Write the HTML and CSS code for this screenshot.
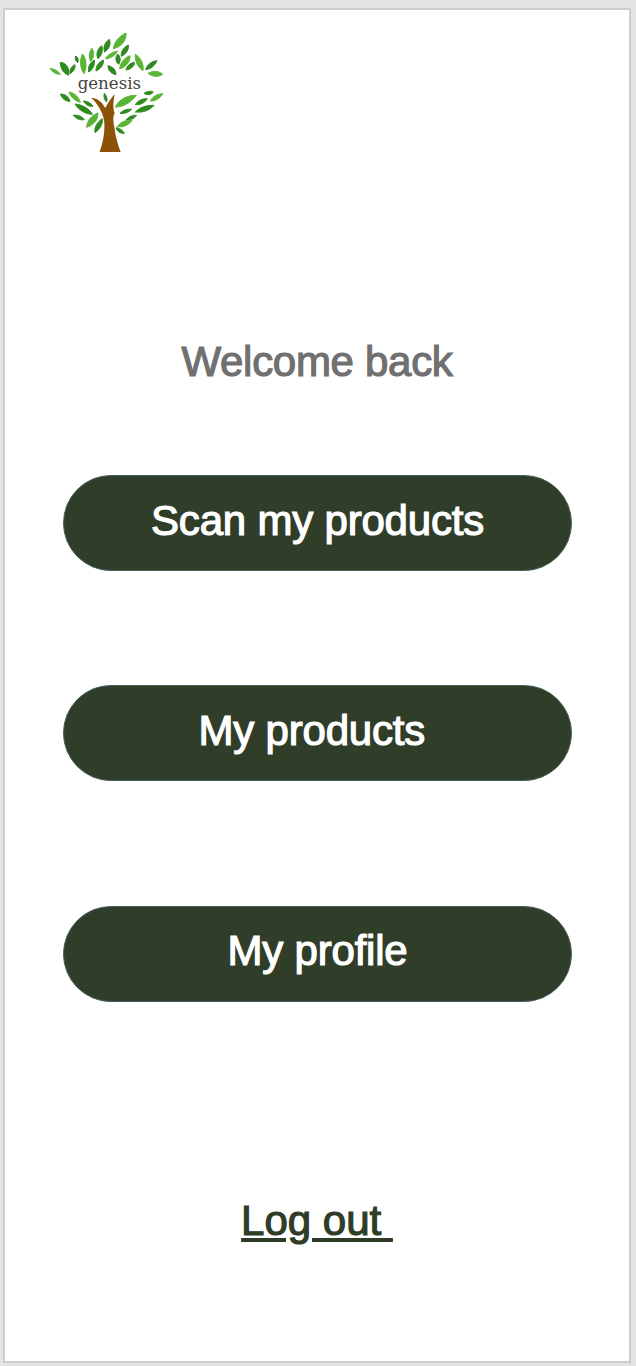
FILE: index.html
```html
<!DOCTYPE html>
<html lang="en">
<head>
<meta charset="utf-8">
<title>Genesis</title>
<link rel="stylesheet" href="styles.css">
</head>
<body>
<main class="frame">
  <header class="brand">
    <svg class="logo" viewBox="0 0 450 420" width="150" height="140" role="img" aria-label="genesis logo">
      <g class="leaf-dark">
        <path d="M91 127C108 128 119 143 116 166C100 160 91 146 91 127Z"/>
        <path d="M137 108C146 113 146 122 143 128C136 122 134 115 137 108Z"/>
        <path d="M135 134C137 146 129 156 120 161C118 148 124 139 135 134Z"/>
        <path d="M193 120C195 135 189 148 176 156C173 140 180 128 193 120Z"/>
        <path d="M215 77C220 92 215 106 204 116C197 102 202 87 215 77Z"/>
        <path d="M238 58C244 73 237 87 224 96C218 81 225 67 238 58Z"/>
        <path d="M295 75C297 90 288 102 274 109C272 94 281 82 295 75Z"/>
        <path d="M263 102C273 112 272 123 266 133C256 124 255 112 263 102Z"/>
        <path d="M220 120C222 135 211 147 198 153C197 138 206 127 220 120Z"/>
        <path d="M234 137C250 140 258 151 258 164C243 161 234 151 234 137Z"/>
        <path d="M313 127C314 139 303 148 288 150C290 138 300 129 313 127Z"/>
        <path d="M381 122C375 137 362 147 347 149C351 134 364 124 381 122Z"/>
        <path d="M91 222C106 222 117 231 120 244C105 244 96 235 91 222Z"/>
        <path d="M135 252C155 254 178 265 187 283C165 282 146 270 135 252Z"/>
        <path d="M160 243C172 243 184 250 189 259C176 260 167 254 160 243Z"/>
        <path d="M130 286C143 284 156 289 163 299C149 301 138 296 130 286Z"/>
        <path d="M223 220C230 228 233 237 230 246C223 240 220 230 223 220Z"/>
        <path d="M342 220C352 213 361 212 370 216C362 225 352 227 342 220Z"/>
        <path d="M352 236C344 249 331 255 316 254C323 241 337 236 352 236Z"/>
        <path d="M372 256C358 272 339 278 316 276C330 261 350 256 372 256Z"/>
        <path d="M305 268C295 278 283 282 270 280C279 270 292 266 305 268Z"/>
        <path d="M320 286C311 297 300 302 288 300C297 289 308 285 320 286Z"/>
        <path d="M217 296C219 312 210 328 195 338C192 322 202 306 217 296Z"/>
        <path d="M258 323C270 325 279 331 283 340C271 341 262 335 258 323Z"/>
      </g>
      <g class="leaf-light">
        <path d="M60 145C74 147 85 153 91 163C77 163 67 156 60 145Z"/>
        <path d="M158 102C170 119 171 143 162 161C150 144 148 120 158 102Z"/>
        <path d="M186 85C194 100 192 113 182 124C175 110 177 96 186 85Z"/>
        <path d="M288 39C290 58 277 80 250 86C253 65 268 48 288 39Z"/>
        <path d="M263 94C255 107 242 115 226 117C233 104 247 96 263 94Z"/>
        <path d="M300 107C301 125 288 141 269 147C270 129 283 114 300 107Z"/>
        <path d="M316 103C333 114 342 132 339 152C323 142 314 123 316 103Z"/>
        <path d="M354 160C371 151 387 153 398 163C385 172 367 171 354 160Z"/>
        <path d="M117 216C135 220 147 232 151 247C135 243 123 232 117 216Z"/>
        <path d="M319 226C298 253 275 261 256 261C267 238 292 226 319 226Z"/>
        <path d="M398 221C390 236 377 243 361 243C368 229 382 222 398 221Z"/>
        <path d="M204 279C205 300 190 315 170 322C171 301 185 286 204 279Z"/>
        <path d="M306 301C297 315 282 322 262 320C271 306 287 299 306 301Z"/>
      </g>
      <path class="trunk" d="M184 233C202 234 216 246 226 264C233 250 241 238 254 222C251 240 247 262 254 280C248 290 250 305 253 322C257 352 264 376 272 396H209C220 365 226 330 222 300C218 276 202 250 184 233Z"/>
      <text class="logo-text" x="143" y="206" textLength="190" lengthAdjust="spacingAndGlyphs">genesis</text>
    </svg>
  </header>
  <h1 class="welcome">Welcome back</h1>
  <nav class="actions">
    <a class="pill" href="#">Scan my products</a>
    <a class="pill" href="#">My products </a>
    <a class="pill pill-last" href="#">My profile</a>
  </nav>
  <a class="logout" href="#">Log out </a>
</main>
</body>
</html>
```

FILE: styles.css
```css
* { box-sizing: border-box; }
html, body { margin: 0; padding: 0; }
body {
  height: 1366px;
  overflow: hidden;
  background: #e3e3e3;
  padding: 8px 5px 3px 3px;
  font-family: "Liberation Sans", Arial, sans-serif;
}
.frame {
  height: 1355px;
  background: #fff;
  border: 2px solid #cdcdcd;
  display: flex;
  flex-direction: column;
  align-items: center;
}
.brand {
  align-self: flex-start;
  height: 150px;
  padding: 10px 0 0 25px;
}
.logo { display: block; }
.leaf-dark {
  fill: #2f8a1f;
  stroke: #2f8a1f;
  stroke-width: 3;
  stroke-linejoin: round;
}
.leaf-light {
  fill: #5ab534;
  stroke: #5ab534;
  stroke-width: 3;
  stroke-linejoin: round;
}
.trunk { fill: #8b5208; }
.logo-text {
  font-family: "DejaVu Serif", "Liberation Serif", serif;
  font-size: 52px;
  fill: #444442;
}
.welcome {
  margin: 156px 0 0;
  font-size: 42px;
  line-height: 92px;
  height: 90px;
  font-weight: 400;
  color: #707070;
  letter-spacing: -0.3px;
  -webkit-text-stroke: 1.2px #707070;
}
.actions {
  margin-top: 69px;
  display: flex;
  flex-direction: column;
  align-self: stretch;
  padding: 0 57px 0 58px;
}
.pill {
  height: 96px;
  border: 1px solid #45615f;
  border-radius: 48px;
  background: #303d29;
  color: #fff;
  font-size: 42px;
  line-height: 90px;
  letter-spacing: -0.2px;
  text-align: center;
  text-decoration: none;
  white-space: pre;
  -webkit-text-stroke: 1.2px #fff;
}
.pill:nth-child(2) { margin-top: 114px; }
.pill-last {
  margin-top: 125px;
  line-height: 88px;
}
.logout {
  margin-top: 189px;
  font-size: 42px;
  line-height: 60px;
  color: #2f3d28;
  white-space: pre;
  text-decoration: underline;
  -webkit-text-stroke: 1.2px #2f3d28;
}
```
